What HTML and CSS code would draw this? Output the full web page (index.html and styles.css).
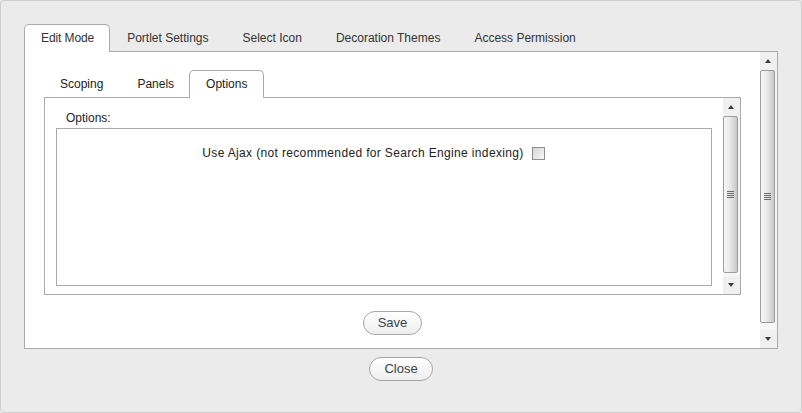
FILE: index.html
```html
<!DOCTYPE html>
<html>
<head>
<meta charset="utf-8">
<link rel="stylesheet" href="styles.css">
</head>
<body>
<div class="window">
  <div class="tabs">
    <div class="tab active">Edit Mode</div>
    <div class="tab">Portlet Settings</div>
    <div class="tab">Select Icon</div>
    <div class="tab">Decoration Themes</div>
    <div class="tab">Access Permission</div>
  </div>
  <div class="panel">
    <div class="panel-body">
      <div class="tabs sub">
        <div class="tab">Scoping</div>
        <div class="tab">Panels</div>
        <div class="tab active">Options</div>
      </div>
      <div class="subpanel">
        <div class="subpanel-body">
          <div class="legend">Options:</div>
          <div class="box">
            <div class="option-row">
              <span class="option-label">Use Ajax (not recommended for Search Engine indexing)</span>
              <span class="checkbox"></span>
            </div>
          </div>
        </div>
        <div class="scrollbar inner">
          <div class="sb-btn"><span class="arrow up"></span></div>
          <div class="sb-thumb"><span class="grip"></span></div>
          <div class="sb-track"></div>
          <div class="sb-btn"><span class="arrow down"></span></div>
        </div>
      </div>
      <div class="actions">
        <button class="btn">Save</button>
      </div>
    </div>
    <div class="scrollbar outer">
      <div class="sb-btn"><span class="arrow up"></span></div>
      <div class="sb-thumb"><span class="grip"></span></div>
      <div class="sb-track"></div>
      <div class="sb-btn"><span class="arrow down"></span></div>
    </div>
  </div>
  <div class="footer">
    <button class="btn">Close</button>
  </div>
</div>
</body>
</html>
```

FILE: styles.css
```css
html, body {
  margin: 0;
  padding: 0;
}
body {
  background: #ebebeb;
  font-family: "Liberation Sans", Arial, sans-serif;
  font-size: 12px;
  color: #333;
}
.window {
  box-sizing: border-box;
  width: 802px;
  height: 413px;
  border: 1px solid #cdcdcd;
  border-radius: 4px;
  padding: 23px 23px 0 23px;
}
.tabs {
  display: flex;
  height: 28px;
  position: relative;
  z-index: 1;
}
.tab {
  box-sizing: border-box;
  height: 28px;
  line-height: 27px;
  padding: 0 16px;
  border: 1px solid transparent;
  border-bottom: none;
  border-radius: 5px 5px 0 0;
  color: #333;
  white-space: nowrap;
}
.tab.active {
  background: #fff;
  border-color: #ababab;
  padding: 0 15px 0 16px;
  letter-spacing: -0.1px;
}
.panel {
  box-sizing: border-box;
  height: 298px;
  margin-top: -1px;
  border: 1px solid #ababab;
  background: #fff;
  display: flex;
}
.panel-body {
  flex: 1;
  padding: 18px 19px 0 19px;
  display: flex;
  flex-direction: column;
}
.tabs.sub .tab {
  padding: 0 15px;
  color: #222;
}
.tabs.sub .tab:first-child {
  padding: 0 17px 0 15px;
}
.tabs.sub .tab:nth-child(2) {
  padding: 0 14px 0 15px;
}
.tabs.sub .tab.active {
  padding: 0 16px;
  letter-spacing: 0;
}
.subpanel {
  box-sizing: border-box;
  height: 198px;
  margin-top: -1px;
  border: 1px solid #ababab;
  display: flex;
}
.subpanel-body {
  flex: 1;
  padding: 12px 11px 0 11px;
}
.legend {
  line-height: 16px;
  padding-left: 10px;
  margin-bottom: 2px;
  color: #222;
}
.box {
  box-sizing: border-box;
  height: 158px;
  border: 1px solid #a9a9a9;
  padding-top: 17px;
}
.option-row {
  display: flex;
  justify-content: center;
  align-items: center;
  height: 14px;
  padding-right: 21px;
}
.option-label {
  letter-spacing: 0.35px;
  color: #222;
  line-height: 14px;
}
.checkbox {
  box-sizing: border-box;
  width: 13px;
  height: 13px;
  margin-left: 8px;
  border: 1px solid #8e8e8e;
  background: linear-gradient(135deg, #d6d6d6, #f7f7f7);
}
.scrollbar {
  width: 17px;
  display: flex;
  flex-direction: column;
  background: #f7f7f7;
}
.sb-btn {
  height: 18px;
  background: #f0f0f0;
  display: flex;
  align-items: center;
  justify-content: center;
  padding-right: 1px;
  box-sizing: border-box;
}
.sb-thumb {
  box-sizing: border-box;
  width: 15px;
  border: 1px solid #9c9c9c;
  border-radius: 2px;
  background: linear-gradient(to right, #f6f6f6, #e9e9e9 45%, #c8c8c8);
  display: flex;
  align-items: center;
  justify-content: center;
}
.scrollbar.inner .sb-thumb { height: 157px; }
.scrollbar.outer .sb-thumb { height: 253px; }
.sb-track { flex: 1; }
.grip {
  width: 7px;
  height: 7px;
  background: repeating-linear-gradient(to bottom, #6a6a6a 0, #6a6a6a 1px, transparent 1px, transparent 2px);
}
.arrow {
  width: 0;
  height: 0;
  border-left: 3.5px solid transparent;
  border-right: 3.5px solid transparent;
}
.arrow.up { border-bottom: 4px solid #3e3e3e; }
.arrow.down { border-top: 4px solid #3e3e3e; }
.actions {
  display: flex;
  justify-content: center;
  margin-top: 16px;
}
.btn {
  box-sizing: border-box;
  height: 24px;
  padding: 0 14px;
  border: 1px solid #a6a6a6;
  border-radius: 12px;
  background: linear-gradient(#ffffff, #eeeeee);
  font-family: "Liberation Sans", Arial, sans-serif;
  font-size: 13px;
  color: #3a4250;
  line-height: 22px;
}
.footer {
  display: flex;
  justify-content: center;
  margin-top: 8px;
}
```
